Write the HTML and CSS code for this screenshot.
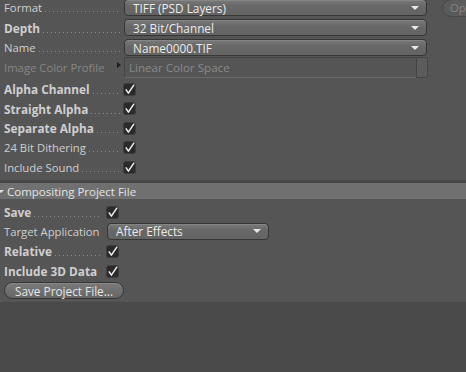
FILE: index.html
```html
<!DOCTYPE html>
<html lang="en">
<head>
    <meta charset="UTF-8">
    <title>Save Settings</title>
    <link rel="stylesheet" href="styles.css">
</head>
<body>
    <div class="panel">
        <div class="select-rows">
            <div class="row">
                <div class="label"><span>Format</span><span class="dots"></span></div>
                <div class="select"><span>TIFF (PSD Layers)</span><span class="caret"></span></div>
                <div class="options-btn">Options...</div>
            </div>
            <div class="row">
                <div class="label bold"><span>Depth</span><span class="dots"></span></div>
                <div class="select"><span>32 Bit/Channel</span><span class="caret"></span></div>
            </div>
            <div class="row">
                <div class="label"><span>Name</span><span class="dots"></span></div>
                <div class="select"><span>Name0000.TIF</span><span class="caret"></span></div>
            </div>
        </div>

        <div class="row row-profile">
            <div class="label disabled"><span>Image Color Profile</span><span class="arrow"></span></div>
            <div class="field">Linear Color Space</div>
            <div class="field-btn"></div>
        </div>

        <div class="check-rows">
            <div class="row check-row">
                <div class="label bold"><span>Alpha Channel</span><span class="dots"></span></div>
                <svg class="check" viewBox="0 0 13 13"><rect x="0.5" y="0.5" width="12" height="12" rx="2.5"/><path d="M3.2 6.8 L5.4 10.2 L10.8 2.2"/></svg>
            </div>
            <div class="row check-row">
                <div class="label bold"><span>Straight Alpha</span><span class="dots"></span></div>
                <svg class="check" viewBox="0 0 13 13"><rect x="0.5" y="0.5" width="12" height="12" rx="2.5"/><path d="M3.2 6.8 L5.4 10.2 L10.8 2.2"/></svg>
            </div>
            <div class="row check-row">
                <div class="label bold"><span>Separate Alpha</span><span class="dots"></span></div>
                <svg class="check" viewBox="0 0 13 13"><rect x="0.5" y="0.5" width="12" height="12" rx="2.5"/><path d="M3.2 6.8 L5.4 10.2 L10.8 2.2"/></svg>
            </div>
            <div class="row check-row">
                <div class="label"><span>24 Bit Dithering</span><span class="dots"></span></div>
                <svg class="check" viewBox="0 0 13 13"><rect x="0.5" y="0.5" width="12" height="12" rx="2.5"/><path d="M3.2 6.8 L5.4 10.2 L10.8 2.2"/></svg>
            </div>
            <div class="row check-row">
                <div class="label"><span>Include Sound</span><span class="dots"></span></div>
                <svg class="check" viewBox="0 0 13 13"><rect x="0.5" y="0.5" width="12" height="12" rx="2.5"/><path d="M3.2 6.8 L5.4 10.2 L10.8 2.2"/></svg>
            </div>
        </div>

        <div class="section-head"><span class="fold"></span>Compositing Project File</div>

        <div class="section">
            <div class="row check-row">
                <div class="label bold"><span>Save</span><span class="dots"></span></div>
                <svg class="check" viewBox="0 0 13 13"><rect x="0.5" y="0.5" width="12" height="12" rx="2.5"/><path d="M3.2 6.8 L5.4 10.2 L10.8 2.2"/></svg>
            </div>
            <div class="row row-target">
                <div class="label"><span>Target Application</span></div>
                <div class="select"><span>After Effects</span><span class="caret"></span></div>
            </div>
            <div class="row check-row">
                <div class="label bold"><span>Relative</span><span class="dots"></span></div>
                <svg class="check" viewBox="0 0 13 13"><rect x="0.5" y="0.5" width="12" height="12" rx="2.5"/><path d="M3.2 6.8 L5.4 10.2 L10.8 2.2"/></svg>
            </div>
            <div class="row check-row">
                <div class="label bold"><span>Include 3D Data</span></div>
                <svg class="check" viewBox="0 0 13 13"><rect x="0.5" y="0.5" width="12" height="12" rx="2.5"/><path d="M3.2 6.8 L5.4 10.2 L10.8 2.2"/></svg>
            </div>
            <button class="push-btn">Save Project File...</button>
        </div>
    </div>
</body>
</html>
```

FILE: styles.css
```css
body {
    margin: 0;
    background-color: #4a4a4a;
    font-family: "Open Sans", "DejaVu Sans", sans-serif;
    font-size: 11.3px;
    color: #cfcfcf;
    overflow: hidden;
}
.panel {
    background-color: #555;
    padding-bottom: 3px;
    overflow: hidden;
}
.row {
    display: flex;
    align-items: center;
    white-space: nowrap;
}
.label {
    display: flex;
    align-items: baseline;
    width: 124px;
    flex-shrink: 0;
    box-sizing: border-box;
    padding: 0 4px;
}
.label.bold {
    font-weight: bold;
    font-size: 11.8px;
}
.label.disabled {
    color: #868686;
}
.dots {
    flex: 1;
    height: 1px;
    margin-left: 3px;
    background-image: linear-gradient(to right, #8a8a8a 0, #8a8a8a 1px, transparent 1px);
    background-size: 4px 1px;
    background-repeat: repeat-x;
}

/* drop-downs */
.select-rows {
    display: flex;
    flex-direction: column;
    gap: 3px;
    margin-top: -1px;
}
.select-rows .row {
    height: 17px;
}
.select {
    display: flex;
    flex-shrink: 0;
    align-items: center;
    justify-content: space-between;
    width: 303px;
    height: 17px;
    box-sizing: border-box;
    padding: 0 7px 0 8px;
    border: 1px solid #363636;
    border-radius: 4px;
    background: linear-gradient(#7a7a7a, #686868 40%, #636363);
    box-shadow: inset 0 1px 0 #858585;
    color: #ececec;
    font-size: 11.8px;
}
.caret {
    width: 0;
    height: 0;
    border-left: 4px solid transparent;
    border-right: 4px solid transparent;
    border-top: 4px solid #e8e8e8;
}
.options-btn {
    flex-shrink: 0;
    margin-left: 15px;
    height: 16px;
    line-height: 16px;
    padding: 0 7px;
    border: 1px solid #474747;
    border-radius: 9px;
    background-color: #5b5b5b;
    color: #858585;
}

/* colour profile */
.row-profile {
    height: 21px;
    margin-top: 1px;
}
.arrow {
    margin-left: auto;
    margin-right: -1px;
    width: 0;
    height: 0;
    border-top: 3px solid transparent;
    border-bottom: 3px solid transparent;
    border-left: 4px solid #1e1e1e;
    align-self: center;
    position: relative;
    top: -3px;
}
.field {
    flex-shrink: 0;
    width: 292px;
    height: 21px;
    line-height: 20px;
    box-sizing: border-box;
    padding-left: 4px;
    border-top: 1px solid #454545;
    border-left: 1px solid #454545;
    border-bottom: 1px solid #6a6a6a;
    background-color: #555;
    color: #8a8a8a;
    font-size: 11.6px;
}
.field-btn {
    flex-shrink: 0;
    width: 12px;
    height: 21px;
    box-sizing: border-box;
    border: 1px solid #444;
    border-radius: 0 3px 3px 0;
    background-color: #5c5c5c;
}

/* check boxes */
.check-rows {
    margin-top: 1.5px;
}
.check-row {
    height: 19.5px;
}
.check {
    flex-shrink: 0;
    width: 13px;
    height: 13px;
    margin-left: -1px;
}
.check rect {
    fill: #2a2a2a;
    stroke: #3d3d3d;
}
.check path {
    fill: none;
    stroke: #efefef;
    stroke-width: 1.5;
    stroke-linecap: round;
    stroke-linejoin: round;
}

/* compositing section */
.section-head {
    display: flex;
    align-items: center;
    margin-top: 3px;
    height: 16px;
    padding-left: 4px;
    border-top: 3px solid #474747;
    background-color: #707070;
    color: #e4e4e4;
    font-size: 11.5px;
}
.fold {
    width: 0;
    height: 0;
    margin-left: -6px;
    margin-right: 3px;
    border-left: 3px solid transparent;
    border-right: 3px solid transparent;
    border-top: 3px solid #e0e0e0;
}
.section {
    padding-top: 3px;
}
.section .label {
    width: 106px;
}
.section .check {
    margin-left: 0;
}
.section .row {
    height: 20px;
}
.section .row-target {
    height: 18px;
}
.row-target .select {
    width: 162px;
    margin-left: 1px;
}
.section .row-target + .row {
    margin-top: 1px;
}
.push-btn {
    display: block;
    margin: 1px 0 0 4px;
    width: 120px;
    height: 17px;
    padding: 0;
    border: 1px solid #363636;
    border-radius: 9px;
    background: linear-gradient(#7a7a7a, #666);
    box-shadow: inset 0 1px 0 #888;
    color: #e6e6e6;
    font-family: inherit;
    font-size: 11.8px;
}
```
